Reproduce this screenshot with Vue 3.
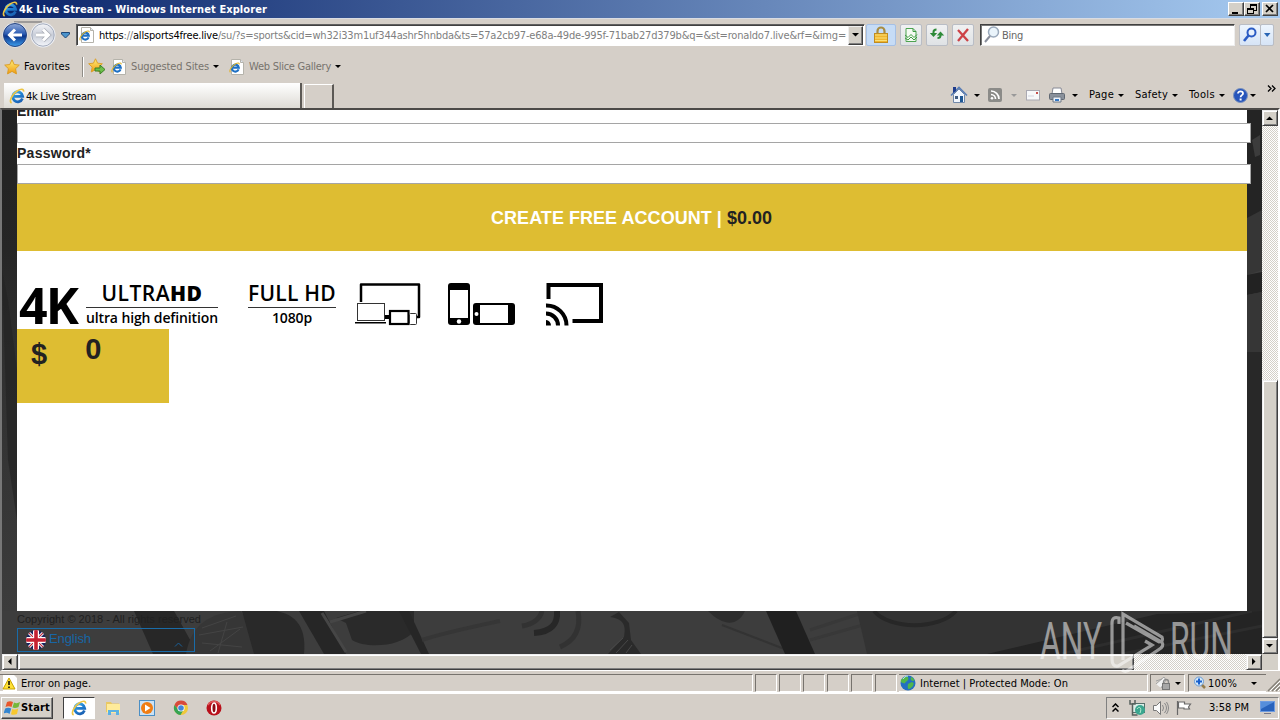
<script setup>
import { nextTick } from 'vue'

// Spreads a label's letters so that it fills a fixed width in pixels.
const vFit = {
  mounted(el, binding) {
    nextTick(() => {
      const natural = el.getBoundingClientRect().width
      const count = el.textContent.length
      el.style.letterSpacing = (binding.value - natural) / count + 'px'
    })
  }
}
const panes = [1, 2, 3, 4, 5, 6]
</script>

<template>
  <div class="screen">
    <svg class="defs" width="0" height="0">
      <defs>
        <linearGradient id="blueball" x1="0" y1="0" x2="0" y2="1"><stop offset="0" stop-color="#8fa9d8" /><stop offset=".45" stop-color="#2c5cb4" /><stop offset=".55" stop-color="#0b358c" /><stop offset="1" stop-color="#3fa0ee" /></linearGradient>
        <linearGradient id="greyball" x1="0" y1="0" x2="0" y2="1"><stop offset="0" stop-color="#f4f5f8" /><stop offset=".5" stop-color="#c9ced9" /><stop offset="1" stop-color="#f3f5fa" /></linearGradient>
        <linearGradient id="gold" x1="0" y1="0" x2="0" y2="1"><stop offset="0" stop-color="#fff07a" /><stop offset="1" stop-color="#f09a10" /></linearGradient>
        <linearGradient id="ieblue" gradientUnits="userSpaceOnUse" x1="4" y1="2" x2="12" y2="15"><stop offset="0" stop-color="#5cc4f4" /><stop offset=".5" stop-color="#1f7fd0" /><stop offset="1" stop-color="#1b5cae" /></linearGradient>
        <linearGradient id="side" x1="0" y1="0" x2="0" y2="1"><stop offset="0" stop-color="#222" /><stop offset=".28" stop-color="#262626" /><stop offset=".5" stop-color="#303030" /><stop offset="1" stop-color="#3c3c3c" /></linearGradient>
        <symbol id="ie" viewBox="0 0 16 16">
          <path d="M13.400 10.600A5 5 0 1 1 13.700 8.300H5" fill="none" stroke="url(#ieblue)" stroke-width="2.800" />
          <path d="M2.600 15C-.4 13.500 3 6 8.500 2.800c3.400-2 6.400-2.300 6.100.8" fill="none" stroke="#ecc544" stroke-width="1.600" />
        </symbol>
        <symbol id="iepage" viewBox="0 0 16 16">
          <path d="M2.500.5h9l3 3v12h-12z" fill="#fff" stroke="#b5b3ab" />
          <path d="M11.500.5v3h3" fill="#dfe7f2" stroke="#b5b3ab" />
          <path d="M9.600 10.400A3.500 3.500 0 1 1 9.800 8.600H4" fill="none" stroke="#1e70c4" stroke-width="2.100" />
          <path d="M1.400 13.200C-.2 12 2.400 7 6.300 5c2.600-1.500 4.200-1.200 3.800.3" fill="none" stroke="#e0b42a" stroke-width="1.100" />
        </symbol>
        <symbol id="star" viewBox="0 0 16 16"><path d="M8 .8l2.200 4.700 5.100.6-3.700 3.600.9 5.200L8 12.400l-4.500 2.500.9-5.200L.7 6.100l5.100-.6z" fill="url(#gold)" stroke="#d99a20" stroke-width=".9" /></symbol>
      </defs>
    </svg>

    <header class="titlebar">
      <svg class="i16"><use href="#ie" /></svg>
      <b v-fit="248">4k Live Stream - Windows Internet Explorer</b>
      <div class="winbtns">
        <span class="wbtn"><svg width="14" height="12"><path d="M3 9h6v2H3z" /></svg></span>
        <span class="wbtn"><svg width="14" height="12"><path d="M5 1h7v2H5zM5 3h1v2H5zM11 3h1v5h-1zM9 7h2v1H9zM2 5h7v2H2zM2 7h1v4H2zM8 7h1v4H8zM2 10h7v1H2z" /></svg></span>
        <span class="wbtn close"><svg width="14" height="12"><path d="M3 2l7 7M10 2L3 9" stroke="#000" stroke-width="1.7" /></svg></span>
      </div>
    </header>

    <div class="address-row">
      <svg class="nav" width="72" height="30" viewBox="0 0 72 30">
        <path d="M14 2h28" stroke="#9d9a99" stroke-width="2" />
        <circle cx="15" cy="15" r="12.500" fill="#e9edf5" /><circle cx="15" cy="15" r="11.500" fill="url(#blueball)" stroke="#26437f" />
        <path d="M22 15H10M15 9.500L9.500 15l5.500 5.500" fill="none" stroke="#fff" stroke-width="3" />
        <circle cx="43" cy="15" r="12.500" fill="#eef0f5" /><circle cx="43" cy="15" r="11.200" fill="url(#greyball)" stroke="#a3abbc" />
        <path d="M36 15h12M43 9.500l5.500 5.500-5.500 5.500" fill="none" stroke="#a7aab3" stroke-width="4.500" /><path d="M36 15h12M43 9.500l5.500 5.500-5.500 5.500" fill="none" stroke="#fff" stroke-width="3" />
        <path d="M61.500 12.500h8v1.500l-4 4-4-4z" fill="#4a93cc" stroke="#1e4778" />
      </svg>
      <div class="address">
        <svg class="i16"><use href="#iepage" /></svg>
        <span v-fit="747" class="url">https<i>://</i>allsports4free.live<i>/su/?s=sports&amp;cid=wh32i33m1uf344ashr5hnbda&amp;ts=57a2cb97-e68a-49de-995f-71bab27d379b&amp;q=&amp;st=ronaldo7.live&amp;rf=&amp;img=</i></span>
        <span class="combo"><svg width="13" height="17"><path d="M3 6h7L6.500 9.500z" /></svg></span>
      </div>
      <span class="tool lock"><svg width="16" height="18" viewBox="0 0 16 18"><path d="M4.500 9V5a3.500 3.500 0 0 1 7 0v4" fill="none" stroke="#a88d43" stroke-width="2.200" /><rect x="1.500" y="7.500" width="13" height="9" fill="#efb52e" stroke="#c08c20" /><path d="M2 9h12M2 12h12M2 14.500h12" stroke="#fae17a" /></svg></span>
      <span class="tool"><svg width="16" height="16" viewBox="0 0 16 16"><path d="M3 1.500h7l3 3v10H3z" fill="#f4faf2" stroke="#4da351" /><path d="M10 1.500v3h3M2 8l3 2.500 3-3 3 3 3-3M2 11l3 2 3-3 3 3 3-3" fill="none" stroke="#3d9a42" /></svg></span>
      <span class="tool"><svg width="16" height="16" viewBox="0 0 16 16"><path d="M4.500 7V5.500Q4.500 3 7.500 3M11.500 7v2q0 2.500-3 2.500" fill="none" stroke="#2d8a38" stroke-width="2" transform="translate(0 -.5)" /><path d="M.8 6h7.400L4.500 10zM7.800 8.500h7.400L11.500 4.500z" fill="#2d8a38" /></svg></span>
      <span class="tool"><svg width="16" height="16" viewBox="0 0 16 16"><path d="M3 3l10 11M13 2L3 14" stroke="#cd4247" stroke-width="2.300" /></svg></span>
      <div class="search">
        <svg width="16" height="18" viewBox="0 0 16 18"><circle cx="9.500" cy="6" r="5" fill="#eaf4fb" stroke="#9aa9bb" stroke-width="1.500" /><path d="M6 10l-5 6" stroke="#8a8f9c" stroke-width="2" /></svg>
        <span v-fit="21">Bing</span>
      </div>
      <span class="tool go"><svg width="16" height="16" viewBox="0 0 16 16"><circle cx="9.500" cy="5.500" r="4" fill="#e7f1fd" stroke="#2b5cc4" stroke-width="2" /><path d="M6.500 8.500L2 14" stroke="#2b5cc4" stroke-width="2.600" /></svg></span>
      <span class="tool godown"><svg width="7" height="5"><path d="M0 0h6.500L3.200 4z" fill="#2966b5" /></svg></span>
    </div>

    <div class="favorites-row">
      <svg class="i16"><use href="#star" /></svg><span v-fit="46" class="fav">Favorites</span><i class="sep"></i>
      <svg class="addfav" width="18" height="17" viewBox="0 0 18 17"><use href="#star" width="15" height="15" /><path d="M7 10h5V7l5 4.500-5 4.500v-3H7z" fill="#6cc04a" stroke="#3c7f25" /></svg>
      <svg class="i16 fav1"><use href="#iepage" /></svg><span v-fit="78" class="dim">Suggested Sites</span><i class="arrow a1"></i>
      <svg class="i16 fav2"><use href="#iepage" /></svg><span v-fit="82" class="dim">Web Slice Gallery</span><i class="arrow a1"></i>
    </div>

    <div class="tab-row">
      <div class="tab"><svg class="i16"><use href="#ie" /></svg><span v-fit="70">4k Live Stream</span></div>
      <div class="newtab"></div>
      <div class="commands">
        <svg width="18" height="18" viewBox="0 0 18 18"><path d="M3.500 8.500v8h11v-8L9 3z" fill="#f1f6fd" stroke="#7188a9" /><path d="M1 9.500L9 1.500l8 8" fill="none" stroke="#587db5" stroke-width="1.600" /><path d="M3 1h3v4L3 7z" fill="#1e3c8c" /><path d="M10 10h3v6h-3z" fill="#1f5794" /><path d="M5 10h3v3H5z" fill="#405d83" /></svg>
        <i class="arrow c1"></i>
        <svg class="rss" width="14" height="14" viewBox="0 0 14 14"><rect width="14" height="14" rx="2" fill="#8b8b88" /><path d="M3 3a8 8 0 0 1 8 8M3 6.500A4.500 4.500 0 0 1 7.500 11" fill="none" stroke="#fff" stroke-width="1.700" /><circle cx="4" cy="10.200" r="1.300" fill="#fff" /></svg>
        <i class="arrow c2"></i>
        <svg class="mail" width="14" height="11" viewBox="0 0 14 11"><rect x=".5" y=".5" width="13" height="9.500" fill="#f7f8fa" stroke="#aaa9b2" /><path d="M10 2h2v2h-2z" fill="#c6504d" /><path d="M2 6h6" stroke="#d0d3df" /></svg>
        <svg class="printer" width="16" height="16" viewBox="0 0 16 16"><path d="M4 1h8l1 6H3z" fill="#fff" stroke="#868995" /><rect x=".5" y="6.500" width="15" height="6" rx="1" fill="#8a919b" stroke="#606872" /><path d="M4 10h8v5H4z" fill="#edf2fa" stroke="#6f7984" /><path d="M6 12h4v2H6z" fill="#3779c3" /></svg>
        <i class="arrow c3"></i>
        <span v-fit="25" class="cmd1">Page</span><i class="arrow c4"></i>
        <span v-fit="33" class="cmd2">Safety</span><i class="arrow c4"></i>
        <span v-fit="26" class="cmd2">Tools</span><i class="arrow c4"></i>
        <svg class="help" width="15" height="15" viewBox="0 0 15 15"><circle cx="7.500" cy="7.500" r="7" fill="#2755bb" stroke="#7a91bc" /><path d="M5 5.500C5 2.500 10 2.700 10 5.500 10 7.300 7.600 7 7.600 9.200" fill="none" stroke="#fff" stroke-width="1.800" /><path d="M6.600 10.500h2v2h-2z" fill="#fff" /></svg>
        <i class="arrow c5"></i>
        <svg class="more" width="9" height="7"><path d="M1 .5l3 3-3 3M5 .5l3 3-3 3" fill="none" stroke="#000" stroke-width="1.300" /></svg>
      </div>
    </div>

    <main class="browser">
      <div class="viewport">
        <svg class="photo" width="1260" height="544" viewBox="0 0 1260 544">
          <rect width="1260" height="544" fill="#3d3d3d" />
          <path d="M0 0h15v501H0z" fill="url(#side)" /><path d="M0 160l6 30 9 70v150L6 350z" fill="#232323" opacity=".7" />
          <path d="M132 501h40l24 43h-45z" fill="#272727" />
          <path d="M184 544c5-30 25-42 55-43l20 43z" fill="#363636" /><path d="M240 501c50-6 65 10 62 43h-50z" fill="#292929" />
          <path d="M200 518l34-12M197 525l44-8M200 533l40 4M208 541l30-22M216 543l9-31" stroke="#444" />
          <path d="M297 501h25l22 43h-22z" fill="#262626" /><path d="M334 508l23-7h55v20c-12 16-48 18-62 9l-6-17z" fill="#2a2a2a" />
          <path d="M328 512l36-11M320 503l24 39" stroke="#464646" stroke-width="3" /><path d="M397 501l22 43h8l-20-43z" fill="#262626" />
          <path d="M420 530c25-8 50-13 78-19" fill="none" stroke="#363636" stroke-width="4" />
          <path d="M532 523c18-1 24-10 23-22" fill="none" stroke="#272727" stroke-width="6" /><path d="M520 516c12-2 18-7 20-15M558 537c16-7 21-20 18-36" fill="none" stroke="#323232" stroke-width="5" />
          <path d="M608 507c15 2 16 10 14 20l-16 17h33l-10-14-2-17-10-11z" fill="#2a2a2a" /><path d="M608 540l13-12M614 543l12-13M624 543l6-8" stroke="#484848" />
          <path d="M706 501h37c-8 17-23 14-37 0" fill="#2d2d2d" /><path d="M720 515l65 25" stroke="#333" stroke-width="2" />
          <path d="M764 501h30l19 43h-30z" fill="#202020" />
          <path d="M808 520l55-18M808 530l60-17" stroke="#383838" stroke-width="3" /><path d="M855 501h405v43H865z" fill="#333" />
          <path d="M872 501c16 19 65 19 82 0" fill="none" stroke="#272727" stroke-width="4" /><path d="M985 544l170-40 105-3v43z" fill="#242424" /><path d="M1060 544l190-43M1120 544l140-28" stroke="#2d2d2d" stroke-width="3" />
          <path d="M1245 0h15v105l-15 5z" fill="#242424" /><path d="M1245 108l15-8v60l-15 5z" fill="#363636" /><path d="M1245 165l15-3v20l-15 3z" fill="#222" /><path d="M1245 185l15-3v60h-15z" fill="#363636" /><path d="M1245 242h15v259h-15z" fill="#282828" />
          <path d="M1250 30l8-5v20l-5 2z" fill="#3c3c3c" />
        </svg>
        <section class="page">
          <label class="email"><span v-fit="43">Email*</span></label>
          <div class="field"></div>
          <label class="password"><span v-fit="74">Password*</span></label>
          <div class="field"></div>
          <button class="create"><span v-fit="236">CREATE FREE ACCOUNT |&nbsp;</span><b v-fit="45">$0.00</b></button>
          <div class="badges">
            <strong class="fourk"><span v-fit="58">4K</span></strong>
            <div class="ultra"><div class="top"><span v-fit="101">ULTRA<b>HD</b></span></div><div class="bottom"><span v-fit="132">ultra high definition</span></div></div>
            <div class="full"><div class="top"><span v-fit="88">FULL HD</span></div><div class="bottom"><span v-fit="40">1080p</span></div></div>
            <svg class="devices" width="250" height="46" viewBox="0 0 250 46">
              <path d="M6 20V2.500h58V35h-4" fill="none" stroke="#000" stroke-width="2.500" stroke-linejoin="round" /><rect x="2.500" y="21.500" width="27" height="17" fill="#fff" stroke="#333" /><path d="M0 40h31v1.500H0z" /><rect x="35" y="29" width="18.500" height="13" fill="#fff" stroke="#000" stroke-width="2.200" /><path d="M30 33h4v4h-4z" /><rect x="54.500" y="31.500" width="7" height="11" rx="1" fill="#fff" stroke="#333" />
              <rect x="93" y="1" width="22" height="42" rx="3" /><path d="M95 8h18v28H95z" fill="#fff" /><circle cx="104" cy="39.500" r="2.200" fill="#fff" />
              <rect x="118" y="21" width="42" height="22" rx="3" /><path d="M125 23h28v18h-28z" fill="#fff" /><circle cx="121.500" cy="32" r="2" fill="#fff" />
              <path d="M193.500 17V3H246v36h-28.500" fill="none" stroke="#000" stroke-width="4" /><path d="M191 23.500A20 20 0 0 1 211.500 43.500M191 31.500a12 12 0 0 1 12 12" fill="none" stroke="#000" stroke-width="4" /><path d="M191 38a5.500 5.500 0 0 1 5 5.500h-5z" />
            </svg>
          </div>
          <div class="price"><b>$</b><b class="zero">0</b></div>
        </section>
        <footer class="pagefoot">
          <div class="copy"><span v-fit="184">Copyright © 2018 - All rights reserved</span></div>
          <div class="lang">
            <svg width="20" height="20" viewBox="0 0 20 20"><clipPath id="round"><circle cx="10" cy="10" r="10" /></clipPath><g clip-path="url(#round)"><path d="M0 0h20v20H0z" fill="#18245f" /><path d="M0 0l20 20M20 0L0 20" stroke="#fff" stroke-width="3" /><path d="M0 0l20 20M20 0L0 20" stroke="#bb2739" stroke-width="1.200" /><path d="M10 0v20M0 10h20" stroke="#fff" stroke-width="6" /><path d="M10 0v20M0 10h20" stroke="#c62132" stroke-width="3.600" /></g></svg>
            <span v-fit="42">English</span><svg class="caret" width="9" height="5"><path d="M1 4.500L4.500 1 8 4.500" fill="none" stroke="#1b6098" /></svg>
          </div>
        </footer>
      </div>
      <div class="vscroll"><span class="sbtn"><svg width="12" height="12"><path d="M2 8h7L5.500 4.500z" /></svg></span><div class="vthumb"></div><span class="sbtn"><svg width="12" height="12"><path d="M2 4h7L5.500 7.500z" /></svg></span></div>
      <div class="hscroll"><span class="sbtn"><svg width="12" height="12"><path d="M7.500 2v7L4 5.500z" /></svg></span><div class="hthumb"></div><span class="sbtn"><svg width="12" height="12"><path d="M4 2v7l3.500-3.500z" /></svg></span></div>
      <div class="corner"></div>
    </main>

    <div class="status">
      <div class="pane message"><svg class="warn" width="16" height="16" viewBox="0 0 16 16"><path d="M1 0h11l3 3v13H1z" fill="#fff" /><path d="M7 3l6 11H1z" fill="#ffe135" stroke="#c9a300" /><path d="M7 6v4M7 11.500v1.500" stroke="#000" stroke-width="1.500" /></svg><span v-fit="70">Error on page.</span></div>
      <div v-for="pane in panes" :key="pane" class="pane mini"></div>
      <div class="pane zone"><svg width="16" height="16" viewBox="0 0 16 16"><circle cx="8" cy="8" r="7.500" fill="#236fc2" /><path d="M3 3c5-4 7 1 4 3S6 9 3 8 0 5 3 3M8 9c6-4 7 0 4 3s-5 3-4-3M11 2c4 2 4 4 2 4s-3-2-2-4" fill="#51b64a" /><path d="M3 4c1-2 3-3 5-3" fill="none" stroke="#c6e7ff" /></svg><span v-fit="148">Internet | Protected Mode: On</span></div>
      <div class="pane protect"><svg width="16" height="15" viewBox="0 0 16 15"><path d="M1 8l8-7 2 3-5 8M1 5l6-2" fill="#f2f2f2" stroke="#a2a2a2" /><path d="M8.500 8V6a2.500 2.500 0 0 1 5 0v2" fill="none" stroke="#888" stroke-width="1.400" /><rect x="7.500" y="7.500" width="7" height="6" fill="#a7a7a7" stroke="#777" /></svg><i class="arrow"></i></div>
      <div class="pane zoom"><svg width="13" height="14" viewBox="0 0 13 14"><path d="M8 8l4 4" stroke="#957c4d" stroke-width="2.500" /><circle cx="6" cy="5.500" r="4.500" fill="#d4e9fa" stroke="#6c9bd2" /><path d="M6 2.500v6M3 5.500h6" stroke="#1960cd" stroke-width="2" /></svg><span v-fit="29">100%</span><i class="arrow"></i></div>
      <svg class="grip" width="13" height="14"><path d="M1 13L13 1M5 13l8-8M9 13l4-4" stroke="#858178" stroke-width="1.500" /><path d="M3 13L13 3M7 13l6-6M11 13l2-2" stroke="#fff" /></svg>
    </div>

    <div class="taskbar">
      <button class="start"><svg width="17" height="16" viewBox="0 0 17 16"><path d="M3 2q3-1.500 6 0L7.500 7q-3-1.500-6 0z" fill="#e8572b" /><path d="M10 2.500q3 1.500 6-.5l-1.500 5q-3 1.500-6 .5z" fill="#75b83b" /><path d="M1.200 8.500q3-1.500 6 0L5.500 14q-2.500-2-6-.5z" fill="#3486d0" /><path d="M8.200 9q3 1.300 6-.4L13 14q-3 1.500-6 .3z" fill="#f8c82f" /></svg><b v-fit="29">Start</b></button>
      <span class="active"><svg class="i16"><use href="#ie" /></svg></span>
      <svg class="app1" width="16" height="16" viewBox="0 0 16 16"><path d="M1 2h5l1 1.500h7V12H1z" fill="#e9c864" /><path d="M2 4h13v9H2z" fill="#ffeb9a" /><path d="M3 15v-5h11v5h-3v-3H6v3z" fill="#5ab1e3" /></svg>
      <svg class="app2" width="16" height="16" viewBox="0 0 16 16"><rect x=".5" y=".5" width="15" height="15" fill="#cbe2f5" stroke="#4b8fc5" /><circle cx="8" cy="8" r="6" fill="#f07d13" /><path d="M6 4.500l5.500 3.500L6 11.500z" fill="#fff" /></svg>
      <svg class="app3" width="16" height="16" viewBox="0 0 16 16"><circle cx="8" cy="8" r="7" fill="#efc83b" /><path d="M1.500 5A7 7 0 0 1 14.500 5H8L5 9.500z" fill="#d84a3c" /><path d="M1.500 5a7 7 0 0 0 6 10l3-5-5 0z" fill="#37a453" /><circle cx="8" cy="8" r="3.600" fill="#fff" /><circle cx="8" cy="8" r="2.800" fill="#4385d9" /></svg>
      <svg class="app4" width="16" height="16" viewBox="0 0 16 16"><circle cx="8" cy="8" r="7.500" fill="#b9101b" /><path d="M2 5a7 7 0 0 1 12 0" fill="none" stroke="#e05a5c" stroke-width="1.500" /><ellipse cx="8" cy="8" rx="2.300" ry="5" fill="#8b0b13" stroke="#fff" stroke-width="1.600" /></svg>
      <div class="tray">
        <svg class="chev" width="7" height="10"><path d="M.5 4l3-3 3 3M.5 8.500l3-3 3 3" fill="none" stroke="#000" stroke-width="1.500" /></svg>
        <svg class="net" width="17" height="16" viewBox="0 0 17 16"><rect x="3.500" y="3.500" width="12" height="9" fill="#d9eee7" stroke="#55706b" /><circle cx="11" cy="10" r="5" fill="#3ba68f" /><path d="M1 0v4h5V0M3.500 4v11h5" fill="none" stroke="#57625d" stroke-width="1.500" /><path d="M8 9c3-4 5 0 3 4" fill="none" stroke="#b7efd2" /></svg>
        <svg class="sound" width="17" height="16" viewBox="0 0 17 16"><path d="M1.500 5.500h3l4-4v13l-4-4h-3z" fill="#fafafa" stroke="#777" /><path d="M10.500 5q2 3 0 6M12.500 3q4 5 0 10M14.500 2q4 6 0 12" fill="none" stroke="#888" /></svg>
        <svg class="flag" width="16" height="16" viewBox="0 0 16 16"><path d="M1.500 1v14M2.500 2h6v2h6l-2 3 1 2H8V8H2.500z" fill="#fff" stroke="#686868" stroke-width="1.200" /></svg>
        <span v-fit="40" class="clock">3:58 PM</span>
        <svg class="desk" width="15" height="14" viewBox="0 0 15 14"><rect x=".5" y=".5" width="14" height="10" fill="#2862bc" stroke="#6e9be0" /><path d="M1 1h13L1 8z" fill="#568edb" /><path d="M4 12h7v1H4z" fill="#778" /></svg>
      </div>
    </div>

    <svg class="watermark" width="210" height="66" viewBox="0 0 210 66">
      <text x="2" y="49" textLength="62" lengthAdjust="spacingAndGlyphs">ANY</text>
      <text x="132" y="49" textLength="63" lengthAdjust="spacingAndGlyphs">RUN</text>
      <path d="M81 14V8q-7-2-7 5v36q0 8 6 7l34-21-7-4M85 50V4l39 23q2 5-3 5L88 13M84 60q4 3 8-1l31-21q4-4-1-7L96 16" fill="none" stroke="#fff" stroke-width="3.200" />
    </svg>
  </div>
</template>

<style>
html, body { margin: 0; overflow: hidden; }
</style>

<style scoped>
* { box-sizing: border-box; }
.screen { position: relative; width: 1280px; height: 720px; overflow: hidden; background: #d5cfc8; color: #000; font: 11px/14px "DejaVu Sans Condensed", "DejaVu Sans", sans-serif; font-stretch: condensed; white-space: nowrap; }
.defs { position: absolute; }
svg { display: block; flex: none; }
span, b { flex: none; }
.i16 { width: 16px; height: 16px; }
.titlebar { display: flex; align-items: center; height: 18px; padding-left: 2px; background: linear-gradient(90deg, #0a246a, #a6caf0); color: #fff; }
.titlebar b { position: relative; top: 1px; margin-left: 1px; }
.winbtns { display: flex; margin-left: auto; margin-right: 2px; }
.wbtn { width: 16px; height: 14px; background: #d4d0c8; border: 1px solid; border-color: #fff #404040 #404040 #fff; box-shadow: inset -1px -1px #808080; }
.close { margin-left: 2px; }
.address-row { display: flex; height: 33px; padding-top: 6px; border-top: 1px solid #d9dce3; }
.nav { margin-top: -5px; }
.address { display: flex; align-items: center; width: 789px; height: 22px; margin-top: -1px; margin-left: 4px; background: #fff; border: 1px solid; border-color: #606060 #fff #fff #606060; box-shadow: inset 1px 1px #404040; }
.address .i16 { margin-left: 2px; }
.url { position: relative; top: 1px; margin-left: 4px; }
.url i { font-style: normal; color: #808080; }
.combo { width: 15px; height: 19px; margin-left: 2px; background: #d4d0c8; border: 1px solid; border-color: #eee #404040 #404040 #eee; box-shadow: inset -1px -1px #808080; }
.tool { display: flex; align-items: center; justify-content: center; width: 22px; height: 22px; margin-top: -1px; margin-left: 4px; border: 1px solid #b9bdc5; border-radius: 2px; background: linear-gradient(#f0f1f2, #dfe2e5); }
.lock { width: 30px; margin-left: 1px; background: #c6dcf6; border-color: #a5c0e5; }
.search { display: flex; align-items: center; width: 255px; height: 22px; margin-top: -1px; margin-left: 6px; padding-left: 3px; background: #fff; border: 1px solid; border-color: #404040 #eee #eee #404040; color: #666; box-shadow: inset 1px 1px #777; }
.search span { position: relative; top: 1px; margin-left: 2px; }
.go { background: linear-gradient(#edf5fe, #d6e4f6); }
.godown { width: 14px; margin-left: -1px; background: linear-gradient(#edf5fe, #d6e4f6); }
.favorites-row { display: flex; align-items: center; height: 31px; padding-left: 4px; }
.fav { margin-left: 4px; }
.sep { width: 2px; height: 20px; margin-left: 12px; background: #8f8c86; border-right: 1px solid #fff; }
.addfav { margin-left: 4px; }
.fav1 { margin-left: 5px; }
.fav2 { margin-left: 10px; }
.dim { margin-left: 4px; color: #77736d; }
.arrow { flex: none; width: 0; height: 0; border: solid transparent; border-width: 3px 3px 0; border-top-color: #000; }
.a1 { margin-left: 4px; }
.tab-row { display: flex; align-items: flex-end; height: 26px; padding-left: 4px; }
.tab { display: flex; align-items: center; width: 298px; height: 25px; padding-left: 5px; background: linear-gradient(#fff, #dedbd5); border-right: 2px solid #5c5955; }
.tab span { position: relative; top: 1px; margin-left: 1px; }
.newtab { width: 30px; height: 24px; margin-left: 2px; border: 1px solid #fff; border-right: 2px solid #5c5955; border-bottom: 0; }
.commands { display: flex; align-items: center; align-self: center; margin-left: 616px; height: 18px; }
.c1 { margin-left: 6px; }
.rss { margin-left: 8px; }
.c2 { margin-left: 9px; border-top-color: #999; }
.mail { margin-left: 9px; }
.printer { margin-left: 9px; }
.c3 { margin-left: 7px; }
.cmd1 { margin-left: 11px; }
.c4 { margin-left: 4px; }
.cmd2 { margin-left: 11px; }
.help { margin-left: 8px; }
.c5 { margin-left: 2px; }
.more { margin: -13px 0 0 11px; }
.browser { display: grid; grid-template-columns: 1260px 16px; grid-template-rows: 544px 16px; width: 1280px; height: 563px; border: 2px solid; border-color: #4c4a48 #fff #fff #777; border-bottom-width: 1px; }
.viewport { position: relative; overflow: hidden; font-family: "Liberation Sans", Arial, sans-serif; }
.photo { position: absolute; inset: 0; }
.page { position: relative; width: 1230px; height: 501px; margin-left: 15px; background: #fff; color: #222; }
label { display: block; font: bold 14px/15px "Liberation Sans", Arial, sans-serif; }
.email { display: flex; align-items: flex-end; height: 13px; padding-bottom: 4px; }
.password { height: 21px; padding-top: 3px; }
.field { width: 1234px; height: 20px; background: #fff; border: 1px solid #a5a5a5; }
.create { display: flex; align-items: center; justify-content: center; width: 1230px; height: 67px; margin: 0; padding: 1px 1px 0 0; border: 0; background: #debd32; color: #fff; font: bold 18px "Liberation Sans", Arial, sans-serif; }
.create b { color: #222; }
.badges { display: flex; height: 78px; padding: 31px 0 0 2px; color: #000; font-family: "Open Sans", sans-serif; }
.fourk { width: 67px; font-size: 50px; line-height: 46px; font-stretch: normal; }
.ultra { width: 132px; text-align: center; font-stretch: normal; }
.full { width: 88px; margin-left: 30px; text-align: center; font-stretch: normal; }
.top { height: 26px; border-bottom: 1px solid #333; font-size: 21px; line-height: 23px; font-weight: 600; }
.top b { font-weight: 800; }
.bottom { font-size: 14px; line-height: 20px; font-weight: 600; }
.devices { margin-left: 19px; }
.price { display: flex; width: 152px; height: 74px; padding: 9px 0 0 14px; background: #debd32; color: #222; font-size: 29px; line-height: 32px; }
.zero { margin: -5px 0 0 38px; }
.pagefoot { position: relative; padding-left: 15px; }
.copy { height: 17px; color: #202020; font-size: 11px; line-height: 17px; }
.lang { display: flex; width: 178px; height: 24px; border: 1px solid #196ca9; padding: 1px 0 0 8px; color: #1767a5; font-size: 13px; line-height: 18px; }
.lang span { margin-left: 3px; }
.caret { margin: 12px 0 0 83px; }
.vscroll, .hscroll { display: flex; background: repeating-conic-gradient(#fff 0 25%, #d4d0c8 0 50%) 0 0 / 2px 2px; }
.vscroll { flex-direction: column; }
.sbtn { width: 16px; height: 16px; padding: 1px; }
.sbtn, .vthumb, .hthumb { background: #d4d0c8; border: 1px solid; border-color: #eee #404040 #404040 #eee; box-shadow: inset 1px 1px #fff, inset -1px -1px #808080; }
.vthumb { height: 258px; margin-top: 254px; }
.hthumb { width: 1116px; margin-right: 112px; }
.corner { background: #d4d0c8; }
.status { display: flex; height: 22px; padding-top: 3px; border-bottom: 1px solid #fff; }
.pane { display: flex; flex: none; align-items: center; height: 18px; border: 1px solid; border-color: #77736e #fff #fff #77736e; }
.pane span { position: relative; top: 1px; }
.message { width: 753px; border-left: 0; padding-left: 2px; }
.message span { margin-left: 3px; }
.mini { width: 22px; margin-left: 2px; }
.zone { width: 249px; margin-left: 2px; padding-left: 1px; border-left: 0; }
.zone span { margin-left: 4px; }
.protect { width: 35px; margin-left: 2px; padding-left: 4px; }
.protect .arrow { margin-left: 4px; }
.zoom { width: 78px; margin-left: 3px; padding-left: 4px; border-right: 0; }
.zoom span { margin-left: 2px; }
.zoom .arrow { margin-left: 14px; }
.grip { margin: 4px 0 0 1px; }
.taskbar { display: flex; align-items: center; height: 27px; padding: 1px 1px 0; border-top: 1px solid #fff; }
.start { display: flex; align-items: center; width: 52px; height: 22px; padding: 0 0 0 2px; background: #d4d0c8; color: #000; border: 1px solid; border-color: #fff #404040 #404040 #fff; box-shadow: inset -1px -1px #808080; font: 11px/14px "DejaVu Sans Condensed", "DejaVu Sans", sans-serif; font-stretch: condensed; }
.start b { font-weight: 700; }
.active { display: flex; align-items: center; justify-content: center; width: 32px; height: 22px; margin-left: 10px; background: #fff; border: 1px solid; border-color: #404040 #fff #fff #404040; }
.app1 { margin-left: 10px; }
.app2, .app3 { margin-left: 18px; }
.app4 { margin-left: 17px; }
.tray { display: flex; align-items: center; width: 173px; height: 22px; margin-left: auto; padding-left: 5px; border: 1px solid; border-color: #808080 #fff #fff #808080; }
.net { margin-left: 10px; }
.sound { margin-left: 6px; }
.flag { margin-left: 7px; }
.clock { margin-left: 17px; }
.desk { margin-left: 11px; }
.watermark { position: absolute; left: 1038px; top: 610px; opacity: .52; overflow: visible; }
.watermark text { fill: #fff; font: 400 51px Roboto, "Open Sans", sans-serif; }
</style>
